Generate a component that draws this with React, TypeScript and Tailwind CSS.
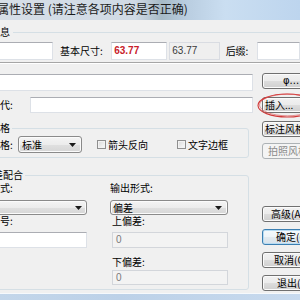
import React from "react";

const tb = "bg-white border border-[#dde1e7] border-t-[#abadb3]";
const btn =
  "h-[16px] w-[70px] shrink-0 flex items-center rounded-[3px] border whitespace-nowrap text-[10px] leading-[12px]";
const btnN =
  "border-[#707070] bg-[linear-gradient(#f2f2f2_0%,#ebebeb_50%,#dddddd_50%,#cfcfcf_100%)] shadow-[inset_0_0_0_1px_#fbfbfb] text-black";
const combo =
  "flex items-center rounded-[3px] border border-[#8a8a8a] bg-[linear-gradient(#f4f4f4_0%,#ececec_50%,#e0e0e0_50%,#d6d6d6_100%)] shadow-[inset_0_0_0_1px_#fbfbfb]";

function Arrow() {
  return (
    <svg width="7" height="4" viewBox="0 0 7 4" className="shrink-0">
      <path d="M0 0H7L3.5 4Z" fill="#1a1a1a" />
    </svg>
  );
}

function Check() {
  return (
    <div className="w-[9px] h-[9px] shrink-0 border border-[#8f8f8f] bg-[linear-gradient(135deg,#d8d8d8,#fbfbfb)] shadow-[inset_0_0_0_1px_#f2f2f2]" />
  );
}

export default function App() {
  return (
    <div className="relative w-[300px] h-[300px] overflow-hidden bg-[#f0f0f0] flex flex-col font-['Noto_Sans_CJK_SC',sans-serif] text-[10px] leading-[12px] text-black">
      {/* title bar */}
      <div className="h-[20px] shrink-0 flex items-start bg-[linear-gradient(90deg,#d6dee7_0%,#d0dae5_45%,#a6bac6_54%,#b9cde0_62%,#cadef1_75%,#bdd5ee_100%)]">
        <span className="ml-[-3px] mt-[2px] text-[12px] leading-[14px] text-[#1b1b1b] whitespace-nowrap">
          属性设置 (请注意各项内容是否正确)
        </span>
      </div>

      <div className="flex-1 flex flex-col">
        {/* group 1 header */}
        <div className="mt-[6px] flex items-center h-[12px]">
          <span className="ml-[-10px] pr-[3px] whitespace-nowrap">信息</span>
          <div className="flex-1 h-px bg-[#d5dfe5]" />
        </div>
        {/* group 1 row */}
        <div className="mt-[4px] flex items-center h-[18px]">
          <div className={`ml-[-3px] w-[58px] h-full ${tb}`} />
          <span className="ml-[7px] w-[53px] whitespace-nowrap">基本尺寸:</span>
          <div className={`w-[58px] h-full ${tb} flex items-center pl-[2px] font-['Liberation_Sans',sans-serif] font-bold text-[10px] text-[#c8202a]`}>
            63.77
          </div>
          <div className="ml-[2px] w-[52px] h-full bg-[#efefef] border border-[#d9dce2] flex items-center pl-[2px] font-['Liberation_Sans',sans-serif] text-[10px] text-[#3a3a3a]">
            63.77
          </div>
          <span className="ml-[6px] w-[32px] whitespace-nowrap">后缀:</span>
          <div className={`w-[45px] h-full ${tb}`} />
        </div>
        <div className="mt-[2px] h-[2px] border-t border-[#a6a6a6] bg-white" />

        {/* main section */}
        <div className="flex">
          {/* left column */}
          <div className="w-[253px] shrink-0 flex flex-col">
            <div className={`mt-[10px] ml-[-3px] w-[256px] h-[17px] ${tb}`} />
            <div className="mt-[6px] h-[16px] flex items-center">
              <div className="w-[30px] shrink-0 overflow-visible">
                <span className="ml-[-10px] whitespace-nowrap block">替代:</span>
              </div>
              <div className={`flex-1 h-full ${tb}`} />
            </div>

            {/* group 风格 */}
            <div className="mt-[15px] ml-[-5px] w-[254px] border border-[#d5dfe5] rounded-[3px] pb-[4px] flex flex-col">
              <span className="mt-[-7px] ml-[-6px] h-[12px] w-fit pr-[2px] bg-[#f0f0f0] whitespace-nowrap">
                风格
              </span>
              <div className="mt-[2px] h-[17px] flex items-center">
                <span className="ml-[-6px] w-[28px] shrink-0 whitespace-nowrap">风格:</span>
                <div className={`w-[64px] h-[17px] ${combo} pl-[3px] pr-[5px] justify-between`}>
                  <span>标准</span>
                  <Arrow />
                </div>
                <div className="ml-[15px]">
                  <Check />
                </div>
                <span className="ml-[2px] whitespace-nowrap">箭头反向</span>
                <div className="ml-[29px]">
                  <Check />
                </div>
                <span className="ml-[2px] whitespace-nowrap">文字边框</span>
              </div>
            </div>

            {/* group 公差配合 */}
            <div className="mt-[17px] ml-[-5px] w-[254px] border border-[#d5dfe5] rounded-[3px] pb-[4px] flex flex-col">
              <span className="mt-[-7px] ml-[-13px] h-[12px] w-fit pr-[2px] bg-[#f0f0f0] whitespace-nowrap">
                公差配合
              </span>
              <div className="flex">
                <div className="ml-[1px] w-[90px] shrink-0 flex flex-col">
                  <span className="mt-[1px] h-[12px] ml-[-27px] whitespace-nowrap">输入形式:</span>
                  <div className={`mt-[6px] h-[15px] ${combo} justify-end pr-[4px]`}>
                    <Arrow />
                  </div>
                  <span className="h-[12px] ml-[-7px] whitespace-nowrap">符号:</span>
                  <div className={`mt-[5px] h-[16px] ${tb}`} />
                </div>
                <div className="ml-[23px] w-[118px] shrink-0 flex flex-col">
                  <span className="mt-[1px] h-[12px] whitespace-nowrap">输出形式:</span>
                  <div className={`mt-[6px] h-[15px] ${combo} justify-between pl-[2px] pr-[5px]`}>
                    <span>偏差</span>
                    <Arrow />
                  </div>
                  <span className="h-[12px] ml-[2px] whitespace-nowrap">上偏差:</span>
                  <div className="mt-[5px] ml-[2px] h-[16px] bg-[#f3f3f3] border border-[#d3d6db] flex items-center pl-[3px] text-[#7a7a7a] font-['Liberation_Sans',sans-serif]">
                    0
                  </div>
                  <span className="mt-[8px] h-[12px] ml-[2px] whitespace-nowrap">下偏差:</span>
                  <div className="mt-[2px] ml-[2px] h-[15px] bg-[#f3f3f3] border border-[#d3d6db] flex items-center pl-[3px] text-[#7a7a7a] font-['Liberation_Sans',sans-serif]">
                    0
                  </div>
                </div>
              </div>
            </div>
          </div>

          {/* right column buttons */}
          <div className="ml-[9px] flex flex-col">
            <div className={`${btn} ${btnN} mt-[9px] pl-[20px] font-['DejaVu_Sans',sans-serif]`}>φ...</div>
            <div className={`${btn} ${btnN} mt-[8px] pl-[2px]`}>插入...</div>
            <div className={`${btn} ${btnN} mt-[8px] pl-[2px]`}>标注风格...</div>
            <div className={`${btn} mt-[6px] pl-[5px] border-[#adb2b5] bg-[#f4f4f4] text-[#8a8a8a]`}>拍照风格...</div>
            <div className={`${btn} ${btnN} mt-[47px] pl-[8px]`}>高级(A)</div>
            <div className={`${btn} mt-[7px] pl-[13px] border-[#3c7fb1] bg-[linear-gradient(#f4f9fc_0%,#eef4f8_50%,#e2eaf0_50%,#d8e2ea_100%)] shadow-[inset_0_0_0_1px_#b8dcf3] text-black`}>确定(O)</div>
            <div className={`${btn} ${btnN} mt-[7px] pl-[11px]`}>取消(C)</div>
            <div className={`${btn} ${btnN} mt-[7px] pl-[14px]`}>退出(X)</div>
          </div>
        </div>
      </div>

      {/* bottom frame */}
      <div className="h-[7px] shrink-0 border-t border-[#f6f9fc] bg-[linear-gradient(90deg,#c3d6ea,#bcd1e8_40%,#c8daee)]" />

      {/* red annotation ellipse */}
      <svg className="absolute left-[256px] top-[92px]" width="60" height="27" viewBox="0 0 60 27">
        <ellipse cx="31" cy="13.5" rx="29" ry="11.5" fill="none" stroke="#d23a3a" strokeWidth="1.1" />
        <ellipse cx="31.5" cy="13" rx="28" ry="10.8" fill="none" stroke="#d85050" strokeWidth="0.6" />
      </svg>
    </div>
  );
}
